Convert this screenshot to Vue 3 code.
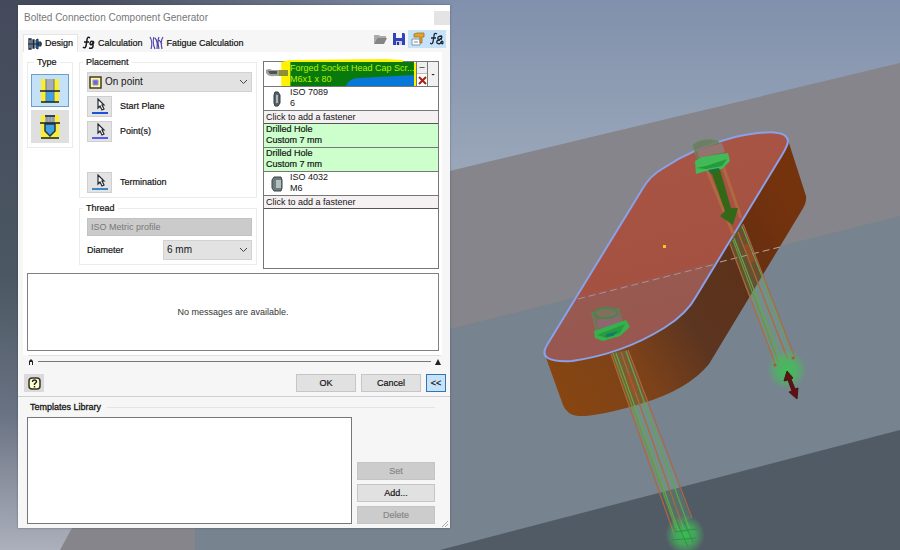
<script setup>
import { ref } from 'vue'

const placement = ref('On point')
const diameter = ref('6 mm')
const picks = [
  { id: 'pick-start', label: 'Start Plane', color: '#2450d8' },
  { id: 'pick-points', label: 'Point(s)', color: '#5a5af0' },
  { id: 'pick-end', label: 'Termination', color: '#3a86c8' },
]
const rods = [0, 5, 10, 15]
</script>

<template>
  <main class="scene">
    <svg class="viewport" viewBox="0 0 900 550" preserveAspectRatio="xMidYMid slice" aria-hidden="true">
      <defs>
        <linearGradient id="sky" x1="0" y1="0" x2="0" y2="1">
          <stop offset="0" stop-color="#8190ac" />
          <stop offset="0.32" stop-color="#9ba8ba" />
        </linearGradient>
        <linearGradient id="left" x1="0" y1="0" x2="0" y2="1">
          <stop offset="0" stop-color="#444a5b" />
          <stop offset="0.5" stop-color="#4b5763" />
          <stop offset="0.75" stop-color="#697282" />
          <stop offset="1" stop-color="#acb0bc" />
        </linearGradient>
        <linearGradient id="fadeX" x1="0" y1="0" x2="1" y2="0">
          <stop offset="0.08" stop-color="#444a5b" />
          <stop offset="0.5" stop-color="#444a5b" stop-opacity="0" />
        </linearGradient>
        <linearGradient id="side" gradientUnits="userSpaceOnUse" x1="545" y1="390" x2="807" y2="230">
          <stop offset="0" stop-color="#884610" />
          <stop offset="0.3" stop-color="#7d4219" />
          <stop offset="0.52" stop-color="#5c3520" />
          <stop offset="0.72" stop-color="#5c321b" />
          <stop offset="0.86" stop-color="#6c300f" />
          <stop offset="1" stop-color="#75330d" />
        </linearGradient>
        <linearGradient id="face" gradientUnits="userSpaceOnUse" x1="660" y1="140" x2="710" y2="334">
          <stop offset="0" stop-color="#a95545" />
          <stop offset="0.65" stop-color="#a55142" />
          <stop offset="0.67" stop-color="#985a50" />
          <stop offset="1" stop-color="#985650" />
        </linearGradient>
        <radialGradient id="glow">
          <stop offset="0" stop-color="#35c94e" stop-opacity="0.9" />
          <stop offset="0.5" stop-color="#45bd5a" stop-opacity="0.7" />
          <stop offset="1" stop-color="#45bd5a" stop-opacity="0" />
        </radialGradient>
      </defs>
      <rect width="900" height="550" fill="url(#sky)" />
      <rect width="900" height="60" fill="url(#fadeX)" />
      <rect width="73" height="550" fill="url(#left)" />
      <path d="M150 243L900 63V550H60L72 528Z" fill="#85858b" />
      <path d="M195 550V393L450 329L900 216V550Z" fill="#77838f" />
      <path d="M440 550L900 430V550Z" fill="#505b66" />

      <path d="M545 355L563 405Q567 415 578 416Q597 417 640 404Q688 390 709 364L802 210Q807 202 806 196L788 140L690 280Z" fill="url(#side)" />
      <path d="M547 345L643 188Q650 176 662 169Q695 147 735 137Q787 126 788 141Q788 145 782 155L697 295Q687 314 664 328Q622 354 572 361Q536 363 547 345Z" fill="url(#face)" stroke="#89a1e8" stroke-width="2" />
      <path d="M578 299L716 264" stroke="#aa8f9d" stroke-width="1" stroke-dasharray="7 4" />
      <path d="M720 262L780 247" stroke="#b6a69d" stroke-width="1" stroke-dasharray="7 4" />
      <rect x="663" y="245" width="3" height="3" fill="#ffc31c" />

      <g fill="none">
        <path d="M707 170L734 236M723 166L741 218" stroke="#b3743e" stroke-width="3" opacity="0.65" />
        <path d="M729 243L742 224L794 358L775 367Z" fill="#6cae78" opacity="0.26" />
        <path d="M611 353L627 350L691 518L674 527Z" fill="#6cae78" opacity="0.26" />
        <g stroke-width="1.2">
          <path v-for="(r, i) in rods" :key="'a' + r" :d="`M${611 + r} ${354 - i}L${674 + r} ${534 - i * 2}`" :stroke="i % 2 ? '#64a554' : '#b0673c'" />
          <path v-for="(r, i) in rods" :key="'b' + r" :d="`M${730 + i * 4} ${244 - i * 6}L${776 + i * 6} ${366 - i * 3}`" :stroke="i % 2 ? '#64a554' : '#b0673c'" />
          <path d="M613 353L676 528M733 240L779 364" stroke="#6b9839" />
          <path d="M628 350L692 518M743 224L795 358" stroke="#ad6649" />
        </g>
        <path d="M628 375L635 392M746 244L753 262" stroke="#ae4b22" stroke-width="5" opacity="0.55" />
      </g>

      <g>
        <path d="M693 145Q702 137 718 141L724 153L697 159Z" fill="#6e7a5c" stroke="#4c9656" opacity="0.8" />
        <path d="M697 150L722 143L725 152L699 158Z" fill="#95736f" />
        <path d="M695 161L702 157L728 153L730 161L722 169L706 171L696 174Z" fill="#43b957" />
        <path d="M696 168L706 166L727 159L722 166L706 169Z" fill="#239d3c" />
        <path d="M708 170L719 168L721 174L711 174Z" fill="#14724e" />
        <path d="M711 171L720 170L731 208L738 208L733 225L720 216L725 211Z" fill="#326817" />
      </g>
      <g>
        <path d="M592 312Q603 304 618 308L623 326L597 334Z" fill="#7f695d" />
        <path d="M592 312L597 334M618 308L623 324" stroke="#568f52" stroke-width="2" opacity="0.6" />
        <path d="M597 320L620 315L622 323L598 329Z" fill="#8d6670" />
        <ellipse cx="606" cy="313" rx="11" ry="5" fill="#82705f" stroke="#49854d" stroke-width="2" />
        <path d="M594 331L626 320L630 327L620 336L603 341L595 338Z" fill="#37b14c" />
        <path d="M597 335L625 324L620 333L607 338Z" fill="#279b42" />
        <path d="M607 334L618 331L613 336L605 337Z" fill="#167b64" />
      </g>
      <ellipse cx="787" cy="370" rx="20" ry="20" fill="url(#glow)" />
      <ellipse cx="685" cy="535" rx="20" ry="20" fill="url(#glow)" />
      <path d="M677 522L688 547M683 520L693 542M674 532L697 529M672 540L696 538" stroke="#218c36" stroke-width="1" opacity="0.7" />
      <circle cx="775" cy="365" r="1.5" fill="#b45237" /><circle cx="793" cy="358" r="1.5" fill="#b45237" />
      <path d="M787 371L793 378L791 379L795 389L798 388L797 399L789 392L792 391L788 380L784 381Z" fill="#650e12" stroke="#3f1c12" />
    </svg>

    <section class="dialog" aria-labelledby="dialog-title">
      <header class="titlebar">
        <h1 id="dialog-title">Bolted Connection Component Generator</h1>
        <button class="close" aria-label="Close"></button>
      </header>

      <div class="tabbar">
        <button class="tab active">
          <svg width="14" height="14" viewBox="0 0 14 14"><path d="M1 2h2v10H1zM5 3h1v8H5z" fill="#fff" stroke="#17283e" stroke-width="1.3" /><path d="M8 3l2-1v10l-2-1zM10 5h3v4h-3z" fill="#3d7daa" stroke="#172d47" /><path d="M0 7h14" stroke="#17283e" /></svg>
          Design
        </button>
        <button class="tab">
          <svg width="13" height="14" viewBox="0 0 13 14"><path d="M8 2Q5 0 5 4L4 10Q3 13 1 11M2 6h5M12 6Q8 4 8 8q1 2 3-1v3q0 3-4 2M12 6l-1 2" fill="none" stroke="#16171b" stroke-width="1.5" /></svg>
          Calculation
        </button>
        <button class="tab">
          <svg width="15" height="14" viewBox="0 0 15 14"><path d="M1 1q3 5 1 12M5 1q-2 5 1 12M6 2q3 3 2 11M10 1q-2 4 0 12M14 1q-3 4-1 12M10 4l3 4" fill="none" stroke="#5145a8" stroke-width="1.2" /></svg>
          Fatigue Calculation
        </button>
        <div class="tools">
          <button class="tool" aria-label="Open">
            <svg width="14" height="14" viewBox="0 0 14 14"><path d="M1 3h5l1 1h6v2H4L1 12z" fill="#aaa" /><path d="M1 12L4 6h10l-3 6z" fill="#858585" /></svg>
          </button>
          <button class="tool" aria-label="Save">
            <svg width="14" height="14" viewBox="0 0 14 14"><path d="M1 1h11l1 1v11H1z" fill="#3343b7" /><path d="M4 1h6v5H4z" fill="#f4f6ff" /><path d="M4 9h6v4H4z" fill="#c9cfee" /><path d="M5 10h2v3H5z" fill="#28348e" /></svg>
          </button>
          <button class="tool on" aria-label="Properties">
            <svg width="14" height="14" viewBox="0 0 14 14"><path d="M1 7h8v6H1z" fill="#fff" stroke="#8296a6" /><path d="M3 2l3-1h7v4h-2v6H9V5H3z" fill="#e3a32b" stroke="#9a6819" stroke-width=".7" /><path d="M3 10h4" stroke="#6c8ab0" /></svg>
          </button>
          <button class="tool on" aria-label="Calculate">
            <svg width="14" height="14" viewBox="0 0 14 14"><path d="M7 2Q4 0 4 4L3 10Q2 13 0 11M1 6h5M12 4Q7 4 8 7q2 1 3-1M12 4l-1 4M10 8q-4 0-3 3q3 2 4-1q2-2 2 1q-1 2-2-1" fill="none" stroke="#1c2430" stroke-width="1.3" /></svg>
          </button>
        </div>
      </div>

      <div class="panel">
        <div class="columns">
          <fieldset class="group type">
            <legend>Type</legend>
            <button class="kind selected" aria-label="Through all connection">
              <svg width="20" height="26" viewBox="0 0 20 26"><path d="M1 1h18v24H1z" fill="#f9ee32" /><path d="M6 1h8v12H6z" fill="#a8adb5" /><path d="M6 13h8v11H6z" fill="#42a1e5" /><path d="M6 1v23M14 1v23" stroke="#687688" /><path d="M0 13h20M1 24h18" stroke="#15202c" stroke-width="1.5" /></svg>
            </button>
            <button class="kind" aria-label="Blind connection">
              <svg width="20" height="26" viewBox="0 0 20 26"><path d="M1 1h18v24H1z" fill="#f9ee32" /><path d="M5 1h10v8H5z" fill="#a8adb5" /><path d="M5 10h10v7l-5 5-5-5z" fill="#42a1e5" stroke="#203650" stroke-width="1.5" /><path d="M10 2v7M7 2v7M13 2v7" stroke="#7a8797" /><path d="M0 9h20M1 24h18M5 2h10" stroke="#15202c" stroke-width="1.3" /></svg>
            </button>
          </fieldset>

          <div class="settings">
            <fieldset class="group placement">
              <legend>Placement</legend>
              <div class="combo with-icon">
                <svg class="combo-icon" width="13" height="13" viewBox="0 0 13 13"><path d="M1 1h11v11H1z" fill="#fff5a8" stroke="#443f17" stroke-width="1.5" /><path d="M4 4h5v5H4z" fill="#6e69c5" stroke="#9896d9" /></svg>
                <select v-model="placement" aria-label="Placement"><option>On point</option></select>
                <svg class="chevron" width="9" height="6" viewBox="0 0 9 6"><path d="M1 1l3.500 3.500L8 1" fill="none" stroke="#444" /></svg>
              </div>
              <div v-for="p in picks" :key="p.id" class="pick">
                <button :id="p.id">
                  <svg width="18" height="17" viewBox="0 0 18 17"><path d="M7 1v9l2-2 2 4 2-1-2-4h2z" fill="#fff" stroke="#222730" stroke-width="1.2" /><path d="M1 15h16" :stroke="p.color" stroke-width="2" /></svg>
                </button>
                <label :for="p.id">{{ p.label }}</label>
              </div>
            </fieldset>

            <fieldset class="group thread">
              <legend>Thread</legend>
              <div class="combo disabled">
                <select disabled aria-label="Thread profile"><option>ISO Metric profile</option></select>
              </div>
              <div class="diameter">
                <label for="diameter">Diameter</label>
                <div class="combo">
                  <select id="diameter" v-model="diameter"><option>6 mm</option></select>
                  <svg class="chevron" width="9" height="6" viewBox="0 0 9 6"><path d="M1 1l3.500 3.500L8 1" fill="none" stroke="#444" /></svg>
                </div>
              </div>
            </fieldset>
          </div>

          <ul class="stack">
            <li class="part head">
              <svg class="marker" viewBox="0 0 150 28" preserveAspectRatio="none" aria-hidden="true">
                <path d="M17 3L26 1L120 0L137 1V4H150V27H17Z" fill="#fff200" />
                <path d="M26 3H148V27H26Z" fill="#087a0d" />
                <path d="M81 27Q84 19 94 19L148 16V27Z" fill="#0878d8" />
              </svg>
              <div class="thumb"><svg width="22" height="12" viewBox="0 0 22 12"><path d="M0 2q3-2 6 0h16v6H8q-5 1-8-3z" fill="#9ea19b" /><path d="M2 3h9v3H4z" fill="#4f5350" /><path d="M13 2h9v6h-9z" fill="#8f9130" /></svg></div>
              <div class="name">Forged Socket Head Cap Scr...<br>M6x1 x 80</div>
              <div class="edit">
                <button aria-label="Edit">–</button>
                <button aria-label="Remove"><svg width="9" height="9" viewBox="0 0 9 9"><path d="M1 1l7 7M8 1L1 8" stroke="#a92016" stroke-width="2" /></svg></button>
              </div>
              <button class="more" aria-label="More">-</button>
            </li>
            <li class="part">
              <div class="thumb"><svg width="8" height="16" viewBox="0 0 8 16"><path d="M2 1h3l2 3v8l-2 3H2L1 12V4z" fill="#59656a" stroke="#31393e" /><path d="M3 4h2v8H3z" fill="#aeb8bb" /></svg></div>
              <div class="name">ISO 7089<br>6</div>
            </li>
            <li class="add"><button>Click to add a fastener</button></li>
            <li class="part hole">Drilled Hole<br>Custom 7 mm</li>
            <li class="part hole">Drilled Hole<br>Custom 7 mm</li>
            <li class="part">
              <div class="thumb"><svg width="12" height="16" viewBox="0 0 12 16"><path d="M3 1h7l1 3v8l-1 3H3L1 12V4z" fill="#6f7a7d" stroke="#3b4447" /><path d="M5 4h5v8H5z" fill="#b2c0c0" /></svg></div>
              <div class="name">ISO 4032<br>M6</div>
            </li>
            <li class="add"><button>Click to add a fastener</button></li>
          </ul>
        </div>
        <div class="messages">No messages are available.</div>
      </div>

      <div class="splitter">
        <svg width="6" height="6" viewBox="0 0 6 6"><path d="M1 6V2l2-2 2 2v4H4V3H2v3z" fill="#222" /></svg>
        <hr>
        <svg width="6" height="6" viewBox="0 0 6 6"><path d="M0 6l3-6 3 6z" fill="#222" /></svg>
      </div>

      <footer class="actions">
        <button class="help" aria-label="Help">
          <svg width="13" height="13" viewBox="0 0 13 13"><rect x="1" y="1" width="11" height="11" rx="3" fill="#ffffd2" stroke="#343421" stroke-width="1.5" /><path d="M4.500 5q0-2 2-2t2 2L6.500 7v1M6.500 9v1.500" fill="none" stroke="#222" stroke-width="1.400" /></svg>
        </button>
        <button class="btn wide">OK</button>
        <button class="btn wide">Cancel</button>
        <button class="btn less">&lt;&lt;</button>
      </footer>

      <section class="library">
        <h2>Templates Library</h2>
        <div class="library-body">
          <div class="templates"></div>
          <div class="library-buttons">
            <button class="btn" disabled>Set</button>
            <button class="btn">Add...</button>
            <button class="btn" disabled>Delete</button>
          </div>
        </div>
        <svg class="grip" width="6" height="6" viewBox="0 0 6 6"><path d="M0 6l6-6M3 6l3-3" stroke="#aaa" /></svg>
      </section>
    </section>
  </main>
</template>

<style>
body { margin: 0; }
</style>

<style scoped>
* { box-sizing: border-box; }
.scene {
  position: relative;
  min-height: 100vh;
  overflow: hidden;
  padding: 5px 0 22px 18px;
  background: #77838f;
  font: 9px/11px "Liberation Sans", Arial, sans-serif;
  color: #151515;
}
.viewport { position: absolute; inset: 0; width: 100%; height: 100%; }
svg { display: block; flex: none; }
button, select { font: inherit; color: inherit; margin: 0; padding: 0; border: 0; border-radius: 0; background: none; }
.dialog {
  position: relative;
  width: 48vw;
  min-width: 420px;
  background: #f6f6f6;
  box-shadow: 0 0 2px #30364480;
}
.titlebar { display: flex; align-items: center; justify-content: space-between; height: 25px; padding-left: 6px; background: #fff; }
h1 { margin: 0; font-size: 10px; font-weight: 400; color: #777; }
.close { width: 16px; height: 14px; background: #e4e4e4; }

.tabbar { display: flex; align-items: flex-end; height: 22px; padding: 0 4px 0 5px; }
.tab { display: flex; align-items: center; gap: 3px; height: 18px; padding: 0 2px 0 4px; color: #111; -webkit-text-stroke: 0.2px; }
.tab.active { background: #fff; border: 1px solid #e5e5e5; border-bottom: 0; padding-right: 4px; }
.tools { display: flex; align-self: flex-start; margin-left: auto; }
.tool { display: grid; place-items: center; width: 19px; height: 18px; }
.tool.on { background: #c5e2fa; }

.panel { margin: 0 8px 0 5px; padding: 4px 3px 4px 4px; background: #fff; }
.columns { display: grid; grid-template-columns: 46px 178px minmax(0, 1fr); column-gap: 6px; align-items: start; }
.group { min-width: 0; margin: 0; border: 1px solid #ebebeb; }
legend { height: 12px; padding: 0 3px; line-height: 12px; -webkit-text-stroke: 0.2px; }
.type { display: flex; flex-direction: column; gap: 3px; padding: 6px 3px 4px; }
.type legend { margin-left: 3px; }
.kind { display: grid; place-items: center; height: 33px; background: #dfdfdf; }
.kind.selected { background: #c5e1f8; border: 1px solid #67a0d3; }
.settings { display: grid; gap: 4px; }
.placement, .thread { padding: 4px 4px 4px 7px; display: flex; flex-direction: column; gap: 4px; }
.placement legend, .thread legend { margin-left: -4px; }
.combo { position: relative; height: 20px; background: #e2e2e2; border: 1px solid #d2d2d2; }
.combo select { width: 100%; height: 100%; padding: 0 16px 0 3px; appearance: none; font-size: 10px; line-height: 12px; }
.with-icon select { padding-left: 17px; }
.combo-icon { position: absolute; left: 1px; top: 3px; }
.chevron { position: absolute; right: 3px; top: 6px; pointer-events: none; }
.combo.disabled { height: 18px; background: #cbcbcb; border-color: #c2c2c2; }
.combo.disabled select { color: #787878; opacity: 1; font-size: 9px; }
.pick { display: flex; align-items: center; gap: 8px; }
.pick button { display: grid; place-items: center; width: 25px; height: 21px; background: #e3e3e3; border: 1px solid #cfcfcf; }
.pick:last-child { margin-top: 26px; }
.diameter { display: grid; grid-template-columns: 76px 1fr; align-items: center; }
label { -webkit-text-stroke: 0.2px; }

.stack { min-height: 208px; margin: 5px 0 0; padding: 0; list-style: none; border: 1px solid #777; }
.part { position: relative; display: flex; height: 24px; border-bottom: 1px solid #777; }
.part .thumb { display: grid; place-items: center; width: 26px; }
.part .name { flex: 1; min-width: 0; white-space: nowrap; line-height: 11px; }
.hole { display: block; padding: 0 2px; background: #ccffcc; -webkit-text-stroke: 0.2px; }
.head { height: 25px; }
.marker { position: absolute; left: 0; top: -3px; width: calc(100% - 22px); height: 28px; }
.head .thumb, .head .name { position: relative; }
.head .name { color: #b9ef00; padding: 1px 0; }
.edit { position: relative; display: grid; grid-template-rows: 1fr 1fr; width: 11px; background: #fff; border-left: 1px solid #777; }
.edit button { display: grid; place-items: center; min-height: 0; }
.edit button:first-child { border-bottom: 1px solid #bbb; background: #eee; }
.more { width: 11px; background: #f1f1f1; border-left: 1px solid #777; font-weight: 700; }
.add { height: 13px; border-bottom: 1px solid #555; background: #f5f1f3; }
.add button { display: block; width: 100%; height: 12px; padding: 0 2px; line-height: 12px; text-align: left; }

.messages { display: grid; place-items: center; height: 78px; margin-top: 4px; border: 1px solid #808080; color: #333; }
.splitter { display: flex; align-items: center; gap: 4px; margin: 0 9px 0 10px; height: 12px; border-top: 1px solid #e0e0e0; }
.splitter hr { flex: 1; height: 1px; margin: 0; border: 0; background: #777; }

.actions { display: flex; align-items: center; gap: 5px; padding: 7px 4px 4px 6px; border-bottom: 1px solid #cfcfcf; }
.help { display: grid; place-items: center; width: 20px; height: 18px; margin-right: auto; background: #dcd9de; }
.btn { height: 18px; background: #e1e1e1; border: 1px solid #c6c6c6; text-align: center; -webkit-text-stroke: 0.2px; }
.btn:disabled { background: #cccccc; border-color: #c4c4c4; color: #888; }
.wide { width: 60px; }
.less { width: 20px; background: #c7e3fa; border: 1px solid #3574b4; }

.library { position: relative; padding: 4px 15px 4px 9px; }
h2 { display: flex; align-items: center; gap: 6px; margin: 0; height: 13px; padding-left: 3px; font-size: 9px; font-weight: 400; -webkit-text-stroke: 0.3px; }
h2::after { content: ""; flex: 1; height: 1px; background: #e4e4e4; }
.library-body { display: grid; grid-template-columns: minmax(0, 1fr) 78px; gap: 5px; margin-top: 3px; }
.templates { min-height: 107px; background: #fff; border: 1px solid #777; }
.library-buttons { display: flex; flex-direction: column; justify-content: flex-end; gap: 4px; }
.grip { position: absolute; right: 2px; bottom: 1px; }
</style>
